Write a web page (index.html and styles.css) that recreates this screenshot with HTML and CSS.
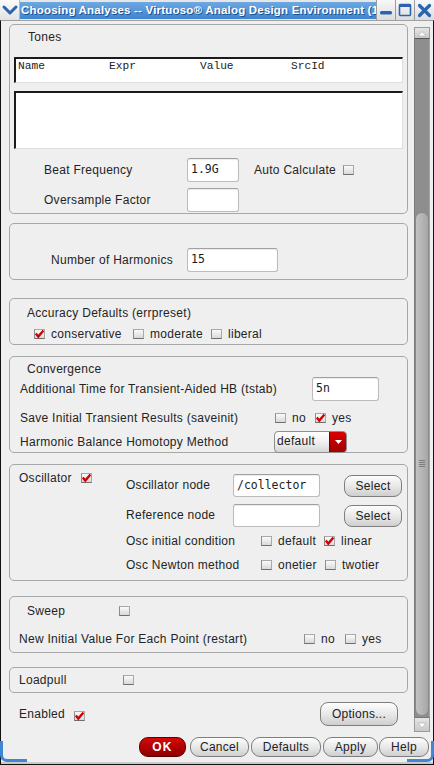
FILE: index.html
```html
<!DOCTYPE html>
<html>
<head>
<meta charset="utf-8">
<title>Choosing Analyses</title>
<link rel="stylesheet" href="styles.css">
</head>
<body>
<div class="window">
  <div class="titlebar">
    <div class="tb-menu">
      <svg width="20" height="20" viewBox="0 0 20 20"><polyline points="4,7 10,13 16,7" fill="none" stroke="#2a63ae" stroke-width="3" stroke-linecap="round" stroke-linejoin="round"/></svg>
    </div>
    <div class="tb-title"><span>Choosing Analyses -- Virtuoso® Analog Design Environment (1</span></div>
    <div class="tb-btn">
      <svg width="18" height="20" viewBox="0 0 18 20"><rect x="3" y="11" width="12" height="3.5" rx="1.5" fill="#2a63ae"/></svg>
    </div>
    <div class="tb-btn">
      <svg width="18" height="20" viewBox="0 0 18 20"><rect x="3.5" y="4.5" width="11" height="11" rx="1" fill="none" stroke="#2a63ae" stroke-width="1.6"/><rect x="3" y="4" width="12" height="3" fill="#2a63ae"/></svg>
    </div>
    <div class="tb-btn last">
      <svg width="19" height="20" viewBox="0 0 19 20"><path d="M4.5 5.5 L14.5 15.5 M14.5 5.5 L4.5 15.5" stroke="#2a63ae" stroke-width="3.2" stroke-linecap="round"/></svg>
    </div>
  </div>

  <div class="frame">
    <div class="main">
      <div class="scrollarea">

        <section class="box tones">
          <div class="box-title">Tones</div>
          <div class="table-head"><span>Name</span><span>Expr</span><span>Value</span><span>SrcId</span></div>
          <div class="table-body"></div>
          <div class="row r-beat">
            <span class="lbl w143">Beat Frequency</span>
            <span class="input w52">1.9G</span>
            <span class="lbl auto">Auto Calculate</span>
            <span class="cb"></span>
          </div>
          <div class="row r-over">
            <span class="lbl w143">Oversample Factor</span>
            <span class="input w52"></span>
          </div>
        </section>

        <section class="box harm">
          <div class="row r-harm">
            <span class="lbl w136">Number of Harmonics</span>
            <span class="input w91">15</span>
          </div>
        </section>

        <section class="box acc">
          <div class="box-title">Accuracy Defaults (errpreset)</div>
          <div class="row r-acc">
            <span class="opt w99"><span class="cb on"><svg width="11" height="10" viewBox="0 0 11 10"><path d="M1.8 4.6 L4.3 7.6 L9.4 1.6" fill="none" stroke="#d10000" stroke-width="2.3"/></svg></span><span class="ot">conservative</span></span>
            <span class="opt w78"><span class="cb"></span><span class="ot">moderate</span></span>
            <span class="opt"><span class="cb"></span><span class="ot">liberal</span></span>
          </div>
        </section>

        <section class="box conv">
          <div class="box-title">Convergence</div>
          <div class="row r-c2">
            <span class="lbl w292">Additional Time for Transient-Aided HB (tstab)</span>
            <span class="input w67">5n</span>
          </div>
          <div class="row r-c3">
            <span class="lbl w255">Save Initial Transient Results (saveinit)</span>
            <span class="opt w40"><span class="cb"></span><span class="ot">no</span></span>
            <span class="opt"><span class="cb on"><svg width="11" height="10" viewBox="0 0 11 10"><path d="M1.8 4.6 L4.3 7.6 L9.4 1.6" fill="none" stroke="#d10000" stroke-width="2.3"/></svg></span><span class="ot">yes</span></span>
          </div>
          <div class="row r-c4">
            <span class="lbl w254">Harmonic Balance Homotopy Method</span>
            <span class="combo"><span class="combo-text">default</span><span class="combo-arrow"><svg width="9" height="6" viewBox="0 0 9 6"><path d="M1 1 L8 1 L4.5 5 Z" fill="#fff"/></svg></span></span>
          </div>
        </section>

        <section class="box osc">
          <div class="osc-left">
            <div class="row r-oscl">
              <span class="lbl w62">Oscillator</span>
              <span class="cb on"><svg width="11" height="10" viewBox="0 0 11 10"><path d="M1.8 4.6 L4.3 7.6 L9.4 1.6" fill="none" stroke="#d10000" stroke-width="2.3"/></svg></span>
            </div>
          </div>
          <div class="osc-right">
            <div class="row r-o1">
              <span class="lbl w107">Oscillator node</span>
              <span class="input w87 h23">/collector</span>
              <span class="btn sel">Select</span>
            </div>
            <div class="row r-o2">
              <span class="lbl w107">Reference node</span>
              <span class="input w87 h23"></span>
              <span class="btn sel">Select</span>
            </div>
            <div class="row r-o3">
              <span class="lbl w135">Osc initial condition</span>
              <span class="opt w63"><span class="cb"></span><span class="ot">default</span></span>
              <span class="opt"><span class="cb on"><svg width="11" height="10" viewBox="0 0 11 10"><path d="M1.8 4.6 L4.3 7.6 L9.4 1.6" fill="none" stroke="#d10000" stroke-width="2.3"/></svg></span><span class="ot">linear</span></span>
            </div>
            <div class="row r-o4">
              <span class="lbl w135">Osc Newton method</span>
              <span class="opt w64"><span class="cb"></span><span class="ot">onetier</span></span>
              <span class="opt"><span class="cb"></span><span class="ot">twotier</span></span>
            </div>
          </div>
        </section>

        <section class="box sweep">
          <div class="row r-s1">
            <span class="lbl w92">Sweep</span>
            <span class="cb"></span>
          </div>
          <div class="row r-s2">
            <span class="lbl w285">New Initial Value For Each Point (restart)</span>
            <span class="opt w41"><span class="cb"></span><span class="ot">no</span></span>
            <span class="opt"><span class="cb"></span><span class="ot">yes</span></span>
          </div>
        </section>

        <section class="box load">
          <div class="row r-load">
            <span class="lbl w104">Loadpull</span>
            <span class="cb"></span>
          </div>
        </section>

        <div class="row r-enabled">
          <span class="lbl w55">Enabled</span>
          <span class="cb on"><svg width="11" height="10" viewBox="0 0 11 10"><path d="M1.8 4.6 L4.3 7.6 L9.4 1.6" fill="none" stroke="#d10000" stroke-width="2.3"/></svg></span>
          <span class="btn options">Options...</span>
        </div>

      </div>

      <div class="scrollbar">
        <div class="sb-btn up"><svg width="14" height="11" viewBox="0 0 14 11"><path d="M3 8 L11 8 L7 3.5 Z" fill="#fff" stroke="#a8a8a8" stroke-width="0.6"/></svg></div>
        <div class="sb-track">
          <div class="sb-thumb"><span class="grip"></span></div>
        </div>
        <div class="sb-btn down"><svg width="14" height="14" viewBox="0 0 14 14"><path d="M3 5 L11 5 L7 10 Z" fill="#fff" stroke="#a8a8a8" stroke-width="0.6"/></svg></div>
      </div>
    </div>

    <div class="actions">
      <span class="btn ok">OK</span>
      <span class="btn b-cancel">Cancel</span>
      <span class="btn b-defaults">Defaults</span>
      <span class="btn b-apply">Apply</span>
      <span class="btn b-help">Help</span>
    </div>
    <div class="frame-bottom"></div>
  </div>
</div>
</body>
</html>
```

FILE: styles.css
```css
* { box-sizing: border-box; margin: 0; padding: 0; }
html, body { width: 434px; height: 765px; overflow: hidden; background: #efefef; }
body {
  font-family: "Liberation Sans", Arial, sans-serif;
  font-size: 12px;
  color: #242424;
  letter-spacing: 0.28px;
}

.window { width: 434px; height: 765px; display: flex; flex-direction: column; background: #efefef; }

/* Title bar */
.titlebar { height: 20px; display: flex; background: #e6e6e6; flex-shrink: 0; }
.tb-menu { width: 20px; height: 20px; background: linear-gradient(#fbfbfb, #e2e2e2); border-right: 1px solid #b9b9b9; }
.tb-menu svg { display: block; }
.tb-title {
  width: 356px; height: 17px; margin-top: 2px;
  background: linear-gradient(#6da8e2, #3f84d0);
  overflow: hidden; white-space: nowrap;
  color: #fff; font-weight: bold; font-size: 11.5px; letter-spacing: 0.2px;
  line-height: 17px; padding-left: 1px;
  text-shadow: 1px 1px 0 #1f4f8c;
}
.tb-btn { width: 19px; height: 20px; background: linear-gradient(#f8f8f8, #dcdcdc); border-left: 1px solid #9c9c9c; }
.tb-btn.last { width: 20px; }
.tb-btn svg { display: block; }

/* Frame */
.frame {
  position: relative; flex: 1; display: flex; flex-direction: column;
  border-left: 1px solid #111; border-right: 1px solid #111; border-bottom: 1px solid #111;
  border-top: 1px solid #a0a0a0;
}
.frame::before, .frame::after {
  content: ""; position: absolute; bottom: 2px; width: 24px; height: 18px;
  border-bottom: 3px solid #3f86d4;
}
.frame::before { left: -1px; border-left: 3px solid #3f86d4; border-bottom-left-radius: 7px; }
.frame::after { right: -1px; border-right: 3px solid #3f86d4; border-bottom-right-radius: 7px; }
.frame-bottom { height: 7px; border-bottom: 2px solid #c9c9c9; }

.main { display: flex; height: 712px; flex-shrink: 0; }
.scrollarea { width: 412px; padding: 3px 0 0 8px; display: flex; flex-direction: column; overflow: hidden; }

/* Group boxes */
.box { width: 399px; border: 1px solid #a7a7a7; border-radius: 5px; flex-shrink: 0; }
.box-title { padding-left: 17px; white-space: nowrap; }

.row { display: flex; align-items: center; white-space: nowrap; }
.lbl { display: inline-block; flex-shrink: 0; }

.w143 { width: 143px; } .w136 { width: 136px; } .w292 { width: 292px; } .w255 { width: 255px; }
.w254 { width: 254px; } .w62 { width: 62px; } .w107 { width: 107px; } .w135 { width: 135px; }
.w92 { width: 92px; } .w285 { width: 285px; } .w104 { width: 104px; } .w55 { width: 55px; }

/* Checkbox */
.cb {
  display: inline-block; width: 11px; height: 10px; flex-shrink: 0;
  border: 1px solid #a9a9a9; border-bottom-color: #6f6f6f; border-left-color: #8c8c8c;
  background: linear-gradient(#fafafa, #d9d9d9);
  position: relative;
}
.cb svg { position: absolute; left: -1px; top: -1px; }
.opt { display: inline-flex; align-items: center; flex-shrink: 0; }
.opt .ot { margin-left: 6px; }
.w99 { width: 99px; } .w78 { width: 78px; } .w40 { width: 40px; } .w63 { width: 63px; } .w64 { width: 64px; } .w41 { width: 41px; }

/* Inputs */
.input {
  display: inline-block; height: 24px; flex-shrink: 0;
  background: #fff; border: 1px solid #bcbcbc; border-top-color: #a0a0a0; border-radius: 3px;
  box-shadow: inset 0 1px 1px rgba(0,0,0,0.08);
  font-family: "DejaVu Sans Mono", "Liberation Mono", monospace; font-size: 11.5px; letter-spacing: 0;
  line-height: 20px; padding-left: 3px; color: #1a1a1a;
}
.input.h23 { height: 23px; }
.w52 { width: 52px; } .w91 { width: 91px; } .w67 { width: 67px; } .w87 { width: 87px; }

/* Buttons */
.btn {
  display: inline-flex; align-items: center; justify-content: center; flex-shrink: 0;
  border: 1px solid #7e7e7e; border-radius: 8px;
  background: linear-gradient(#fdfdfd, #e6e6e6 55%, #cfcfcf);
  color: #222; font-size: 12px; white-space: nowrap;
}

/* Tones */
.tones { margin-top: 0; height: 190px; }
.tones .box-title { height: 24px; line-height: 24px; padding-left: 18px; }
.table-head {
  margin: 8px 0 0 4px; width: 389px; height: 26px;
  background: #fff;
  border-top: 2px solid #1b1b1b; border-left: 2px solid #1b1b1b;
  border-right: 1px solid #dedede; border-bottom: 1px solid #dedede;
  display: flex; padding-left: 2px;
  font-family: "Liberation Mono", "Courier New", monospace; font-size: 11.2px; letter-spacing: 0;
  line-height: 14px; color: #222;
}
.table-head span { width: 91px; }
.table-body {
  margin: 8px 0 0 4px; width: 389px; height: 58px;
  background: #fff;
  border-top: 2px solid #1b1b1b; border-left: 2px solid #1b1b1b;
  border-right: 1px solid #dedede; border-bottom: 1px solid #dedede;
}
.r-beat { margin-top: 9px; height: 24px; padding-left: 34px; }
.r-beat .auto { margin-left: 15px; width: 89px; }
.r-over { margin-top: 6px; height: 24px; padding-left: 34px; }

/* Harmonics */
.harm { margin-top: 9px; height: 57px; padding-top: 24px; }
.r-harm { height: 24px; padding-left: 41px; }

/* Accuracy */
.acc { margin-top: 18px; height: 47px; padding-top: 3px; }
.acc .box-title { height: 23px; line-height: 23px; }
.r-acc { height: 18px; padding-left: 24px; }

/* Convergence */
.conv { margin-top: 11px; height: 97px; padding-top: 4px; }
.conv .box-title { height: 16px; line-height: 16px; }
.r-c2 { height: 24px; padding-left: 10px; }
.r-c3 { margin-top: 4px; height: 26px; padding-left: 10px; }
.r-c4 { height: 21px; padding-left: 10px; }
.combo {
  display: inline-flex; width: 73px; height: 22px; flex-shrink: 0;
  border: 1px solid #8e8e8e; border-radius: 4px; overflow: hidden;
  background: linear-gradient(#ffffff, #f0f0f0 50%, #d6d6d6);
}
.combo-text { flex: 1; padding-left: 2px; line-height: 19px; color: #1a1a1a; }
.combo-arrow {
  width: 17px; display: flex; align-items: center; justify-content: center;
  background: linear-gradient(#d80000, #a30000); border-left: 1px solid #7a0000;
}

/* Oscillator */
.osc { margin-top: 11px; height: 117px; display: flex; }
.osc-left { width: 116px; padding: 5px 0 0 9px; }
.r-oscl { height: 16px; }
.osc-right { padding-top: 8px; }
.r-o1 { height: 24px; }
.r-o2 { height: 24px; margin-top: 6px; }
.r-o3 { height: 27px; }
.r-o4 { height: 22px; }
.btn.sel { width: 58px; height: 22px; margin-left: 24px; margin-top: 2px; }

/* Sweep */
.sweep { margin-top: 15px; height: 57px; padding-top: 3px; }
.r-s1 { height: 22px; padding-left: 17px; }
.r-s2 { margin-top: 4px; height: 25px; padding-left: 9px; }

/* Loadpull */
.load { margin-top: 14px; height: 26px; }
.r-load { height: 24px; padding-left: 9px; }

/* Enabled */
.r-enabled { margin-top: 9px; height: 24px; width: 399px; padding: 0 10px 0 10px; flex-shrink: 0; }
.r-enabled .cb { margin-top: 4px; }
.btn.options { margin-left: auto; width: 78px; height: 24px; }

/* Scrollbar */
.scrollbar { width: 16px; height: 705px; margin: 6px 0 0 1px; display: flex; flex-direction: column; }
.sb-btn { background: linear-gradient(#e6e6e6, #c9c9c9); border: 1px solid #9a9a9a; display: flex; justify-content: center; }
.sb-btn.up { height: 12px; border-bottom-color: #555; }
.sb-btn.down { height: 15px; border-top-color: #777; }
.sb-btn svg { display: block; }
.sb-track { flex: 1; background: #8e8e8e; padding-top: 173px; border-left: 1px solid #7a7a7a; border-right: 1px solid #a5a5a5; }
.sb-thumb {
  height: 504px; border-radius: 7px; border: 1px solid #8a8a8a;
  background: linear-gradient(90deg, #c2c2c2, #b2b2b2 60%, #a6a6a6);
  display: flex; align-items: center; justify-content: center;
}
.grip {
  width: 6px; height: 8px;
  background: repeating-linear-gradient(#7c7c7c 0 1px, transparent 1px 2px);
}

/* Bottom action buttons */
.actions { height: 24px; padding: 4px 4px 0 0; display: flex; justify-content: flex-end; flex-shrink: 0; }
.actions .btn { height: 20px; border-radius: 9px; }
.btn.ok {
  width: 47px; color: #fff; font-weight: bold; letter-spacing: 1.2px;
  background: linear-gradient(#d50a0a, #b00000 55%, #8e0000); border-color: #5c0000;
}
.b-cancel { width: 59px; margin-left: 4px; }
.b-defaults { width: 70px; margin-left: 2px; }
.b-apply { width: 55px; margin-left: 2px; }
.b-help { width: 50px; margin-left: 1px; }
```
